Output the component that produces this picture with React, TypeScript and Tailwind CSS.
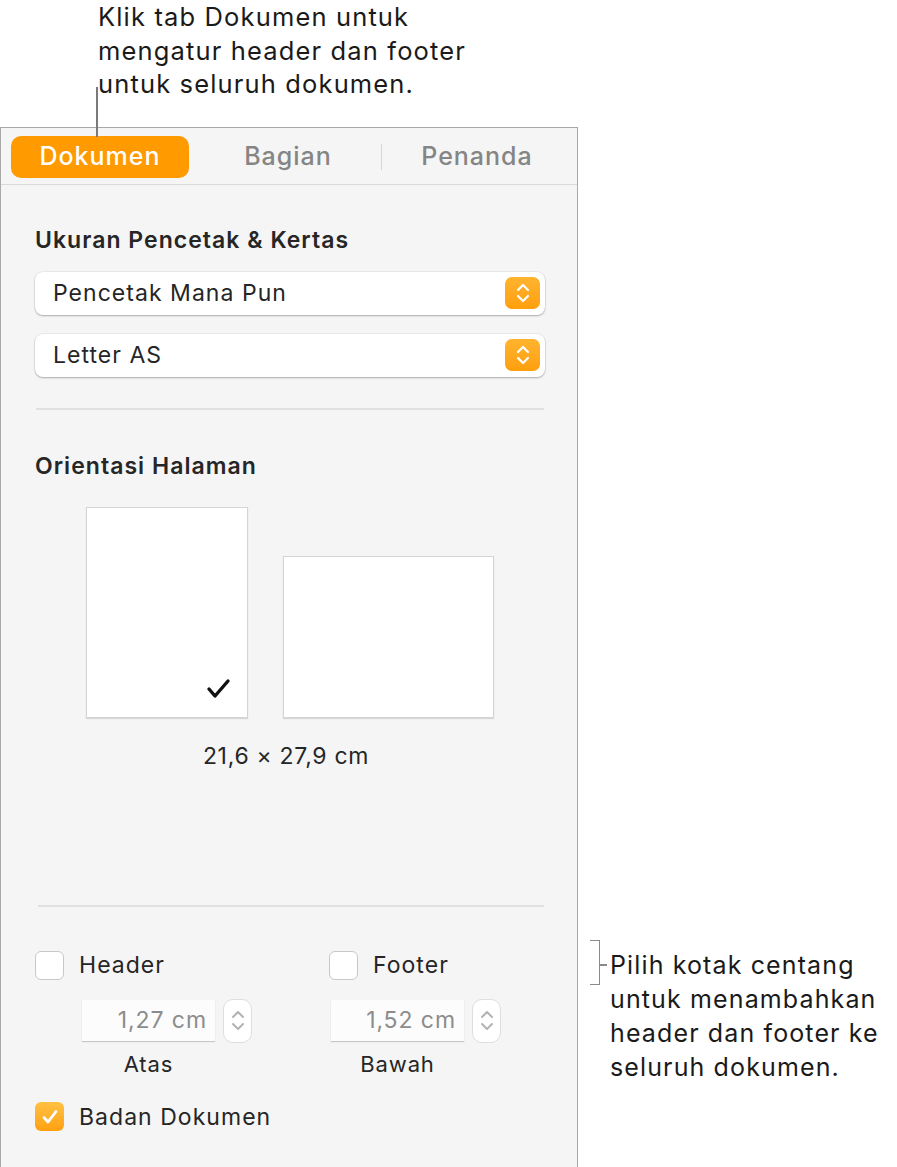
import React from "react";

const font = { fontFamily: "Inter, 'Noto Sans', sans-serif" };

function Stepper() {
  return (
    <div className="absolute right-[5px] top-[5px] w-[35px] h-[32px] rounded-[7px] bg-gradient-to-b from-[#ffb42e] to-[#ff9f0a] flex items-center justify-center">
      <svg width="16" height="24" viewBox="0 0 16 24" fill="none" stroke="white" strokeWidth="2.2" strokeLinecap="round" strokeLinejoin="round">
        <path d="M3 9 L8 4 L13 9" />
        <path d="M3 15 L8 20 L13 15" />
      </svg>
    </div>
  );
}

function Dropdown({ label }: { label: string }) {
  return (
    <div className="relative h-[43px] w-[510px] rounded-[8px] bg-white shadow-[0_1px_2px_rgba(0,0,0,0.28),0_0_0_0.5px_rgba(0,0,0,0.08)] flex items-center pl-[18px] text-[23px] tracking-[0.045em] text-[#262626]">
      {label}
      <Stepper />
    </div>
  );
}

function Checkbox({ checked }: { checked?: boolean }) {
  if (checked) {
    return (
      <div className="w-[29px] h-[29px] rounded-[6px] bg-gradient-to-b from-[#ffc140] to-[#ffa00a] flex items-center justify-center shrink-0">
        <svg width="18" height="18" viewBox="0 0 18 18" fill="none" stroke="white" strokeWidth="2.8" strokeLinecap="round" strokeLinejoin="round">
          <path d="M3 9.5 L7 14 L15 3.5" />
        </svg>
      </div>
    );
  }
  return <div className="w-[29px] h-[29px] rounded-[6px] bg-white border border-[#c8c8c8] shrink-0" />;
}

function NumField({ value, label }: { value: string; label: string }) {
  return (
    <div className="flex flex-col">
      <div className="flex items-center gap-[8px]">
        <div className="w-[133px] h-[41px] bg-[#fcfcfc] shadow-[0_1px_1px_rgba(0,0,0,0.18)] flex items-center justify-end pr-[8px] text-[23px] tracking-[0.04em] text-[#8c8c8c]">
          {value}
        </div>
        <div className="w-[29px] h-[44px] rounded-[10px] bg-white border border-[#dedede] flex flex-col items-center justify-center gap-[3px]">
          <svg width="14" height="10" viewBox="0 0 14 10" fill="none" stroke="#b3b3b3" strokeWidth="2" strokeLinecap="round" strokeLinejoin="round">
            <path d="M2 8 L7 3 L12 8" />
          </svg>
          <svg width="14" height="10" viewBox="0 0 14 10" fill="none" stroke="#b3b3b3" strokeWidth="2" strokeLinecap="round" strokeLinejoin="round">
            <path d="M2 2 L7 7 L12 2" />
          </svg>
        </div>
      </div>
      <div className="w-[133px] text-center mt-[7px] text-[22px] tracking-[0.04em] leading-[28px] text-[#262626]">{label}</div>
    </div>
  );
}

export default function App() {
  return (
    <div className="relative w-[897px] h-[1167px] bg-white overflow-hidden" style={font}>
      {/* top callout */}
      <div className="h-[127px] pl-[98px] text-[25.5px] tracking-[0.045em] leading-[33.5px] text-[#1a1a1a]">
        <div>Klik tab Dokumen untuk</div>
        <div>mengatur header dan footer</div>
        <div>untuk seluruh dokumen.</div>
      </div>
      <div className="absolute left-[96px] top-[87px] w-[1.5px] h-[50px] bg-[#7a7a7a]" />

      <div className="flex">
        {/* panel */}
        <div className="w-[578px] h-[1040px] bg-[#f5f5f5] border-t border-l border-r border-[#a8a8a8]">
          {/* tabs */}
          <div className="h-[57px] border-b border-[#dadada] flex items-start pt-[8px] pl-[10px]">
            <div className="w-[178px] h-[42px] rounded-[10px] bg-[#ff9a00] flex items-center justify-center text-white text-[25px] tracking-[0.04em] font-medium">
              Dokumen
            </div>
            <div className="w-[192px] h-[42px] flex items-center justify-center pl-[6px] text-[25px] tracking-[0.04em] text-[#858585] font-medium">Bagian</div>
            <div className="w-[1px] h-[26px] mt-[8px] bg-[#d6d6d6]" />
            <div className="w-[190px] h-[42px] flex items-center justify-center text-[25px] tracking-[0.04em] text-[#858585] font-medium">Penanda</div>
          </div>

          <div className="pl-[34px]">
            <div className="mt-[41px] text-[23px] tracking-[0.045em] leading-[28px] font-semibold text-[#262626]">Ukuran Pencetak &amp; Kertas</div>
            <div className="mt-[18px]">
              <Dropdown label="Pencetak Mana Pun" />
            </div>
            <div className="mt-[19px]">
              <Dropdown label="Letter AS" />
            </div>
            <div className="mt-[31px] ml-[1px] w-[508px] h-[2px] bg-[#e0e0e0]" />

            <div className="mt-[42px] text-[23px] tracking-[0.045em] leading-[28px] font-semibold text-[#262626]">Orientasi Halaman</div>
            <div className="mt-[27px] ml-[51px] flex items-end gap-[35px]">
              <div className="relative w-[162px] h-[211px] bg-white border border-[#d4d4d4] shadow-[0_1px_1px_rgba(0,0,0,0.12)]">
                <svg className="absolute right-[14px] bottom-[16px]" width="28" height="24" viewBox="0 0 28 24" fill="none" stroke="#111" strokeWidth="3.4" strokeLinecap="round" strokeLinejoin="round">
                  <path d="M4 12 L10 19 L23 4" />
                </svg>
              </div>
              <div className="w-[211px] h-[162px] bg-white border border-[#d4d4d4] shadow-[0_1px_1px_rgba(0,0,0,0.12)]" />
            </div>
            <div className="mt-[24px] w-[502px] text-center text-[23px] tracking-[0.03em] leading-[28px] text-[#262626]">21,6 × 27,9 cm</div>

            <div className="mt-[135px] ml-[3px] w-[506px] h-[2px] bg-[#e0e0e0]" />

            <div className="mt-[41px] flex">
              <div className="w-[294px] flex items-center gap-[15px]">
                <Checkbox />
                <span className="text-[23px] tracking-[0.045em] text-[#262626]">Header</span>
              </div>
              <div className="flex items-center gap-[15px]">
                <Checkbox />
                <span className="text-[23px] tracking-[0.045em] text-[#262626]">Footer</span>
              </div>
            </div>
            <div className="mt-[16px] flex pl-[47px]">
              <div className="w-[249px]">
                <NumField value="1,27 cm" label="Atas" />
              </div>
              <NumField value="1,52 cm" label="Bawah" />
            </div>

            <div className="mt-[22px] flex items-center gap-[15px]">
              <Checkbox checked />
              <span className="text-[23px] tracking-[0.045em] text-[#262626]">Badan Dokumen</span>
            </div>
            <div className="mt-[33px] w-[510px] h-[2px] bg-[#e0e0e0]" />
          </div>
        </div>

        {/* right callout */}
        <div className="relative pl-[32px] pt-[821px] text-[25px] tracking-[0.045em] leading-[34px] text-[#1a1a1a]">
          <div>Pilih kotak centang</div>
          <div>untuk menambahkan</div>
          <div>header dan footer ke</div>
          <div>seluruh dokumen.</div>
          <div className="absolute left-[12px] top-[813px] w-[10px] h-[45px] border-t-[1.5px] border-b-[1.5px] border-r-[1.5px] border-[#8a8a8a]" />
          <div className="absolute left-[22px] top-[837px] w-[7px] h-[1.5px] bg-[#8a8a8a]" />
        </div>
      </div>
    </div>
  );
}
